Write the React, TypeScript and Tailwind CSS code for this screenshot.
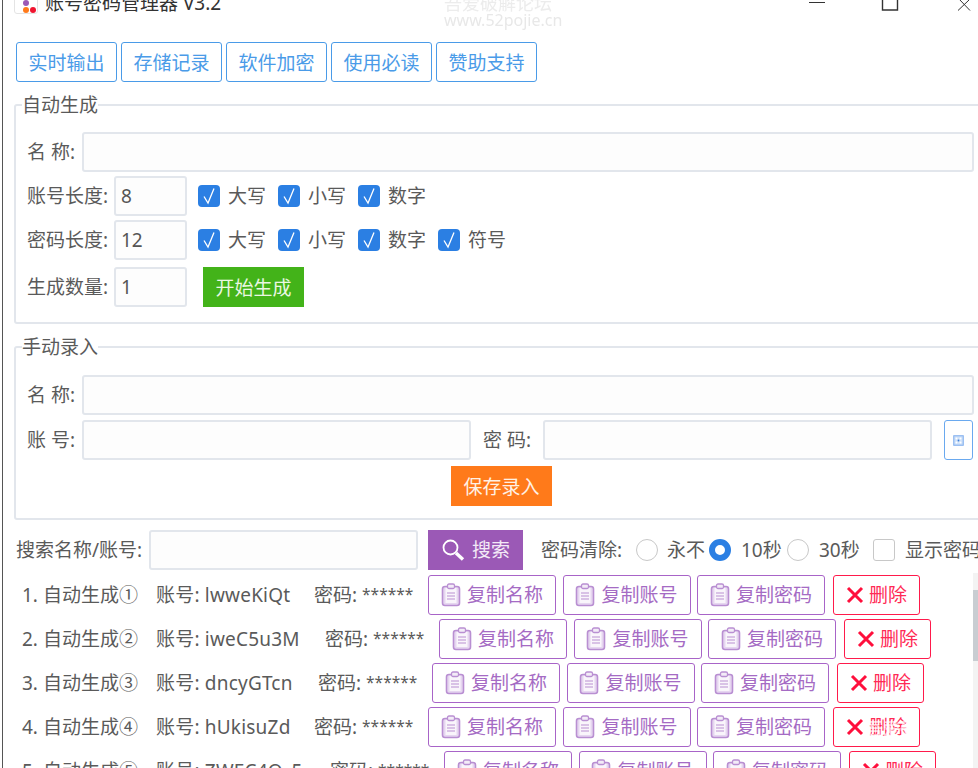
import React from "react";

const Check = () => (
  <span className="flex h-[22px] w-[22px] shrink-0 items-center justify-center rounded-[4px] bg-[#2b7fe3]">
    <svg width="16" height="18" viewBox="0 0 16 18" fill="none" stroke="#fff" strokeWidth="1.3">
      <path d="M3 9.5 L7 16 L13 1.5" />
    </svg>
  </span>
);

const CheckItem = ({ label }: { label: string }) => (
  <span className="flex w-[80px] shrink-0 items-center gap-2">
    <Check />
    <span>{label}</span>
  </span>
);

const inputCls =
  "h-10 rounded-[3px] border-2 border-[#e2e6ec] bg-[#fdfdfd] px-[5px] text-[19px] text-[#555] outline-none";

const Label = ({ children }: { children: React.ReactNode }) => (
  <span className="w-[98px] shrink-0 pl-[11px] whitespace-nowrap">{children}</span>
);

const Clip = () => (
  <svg width="20" height="24" viewBox="0 0 20 24" className="shrink-0">
    <rect x="1.5" y="3.5" width="17" height="19" rx="2.5" fill="#e6d6f0" stroke="#b98fd2" strokeWidth="1.6" />
    <rect x="4.5" y="5" width="11" height="15" fill="#f9f5fb" />
    <rect x="6.5" y="1" width="7" height="4.5" rx="1.5" fill="#f3ecf7" stroke="#b98fd2" strokeWidth="1.3" />
    <path d="M6 10h8M6 13h8M6 16h8" stroke="#b98fd2" strokeWidth="1.1" />
  </svg>
);

const CopyBtn = ({ label }: { label: string }) => (
  <button className="flex h-10 w-[128px] shrink-0 items-center justify-center gap-[6px] rounded-[3px] border border-[#a864c8] text-[#a56bc4]">
    <Clip />
    {label}
  </button>
);

const DelBtn = () => (
  <button className="ml-[1.5px] flex h-10 w-[87px] shrink-0 items-center justify-center gap-[5px] rounded-[3px] border border-[#ff1a4b] text-[#ff2a55]">
    <svg width="18" height="18" viewBox="0 0 18 18" stroke="#ff0f3c" strokeWidth="3" className="shrink-0">
      <path d="M2 2 L16 16 M16 2 L2 16" />
    </svg>
    删除
  </button>
);

const rows = [
  { n: "1. 自动生成①", a: "lwweKiQt", w: "w-[158px]" },
  { n: "2. 自动生成②", a: "iweC5u3M", w: "w-[169px]" },
  { n: "3. 自动生成③", a: "dncyGTcn", w: "w-[162px]" },
  { n: "4. 自动生成④", a: "hUkisuZd", w: "w-[158px]" },
  { n: "5. 自动生成⑤", a: "ZWEC4Q_5", w: "w-[174px]" },
];

const Radio = ({ on }: { on?: boolean }) =>
  on ? (
    <span className="h-[22px] w-[22px] shrink-0 rounded-full border-[6px] border-[#2b7fe3] bg-white" />
  ) : (
    <span className="h-[22px] w-[22px] shrink-0 rounded-full border border-[#c8c8c8] bg-white" />
  );

const tabs = ["实时输出", "存储记录", "软件加密", "使用必读", "赞助支持"];

export default function App() {
  return (
    <div className="relative h-[768px] w-[978px] overflow-hidden bg-white font-['Noto_Sans','Noto_Sans_CJK_SC',sans-serif] text-[19px] leading-[26px] text-[#5a5a5a]">
      <div className="ml-[2px] h-full w-[990px] border-l border-[#555] pl-[11px]">
        {/* title bar */}
        <div className="flex h-[42px] items-start">
          <div className="relative -mt-[9px] h-[23px] w-[24px] shrink-0 rounded-[3px] border border-[#e4e4e4] bg-white">
            <span className="absolute left-[8px] top-[8px] h-[6px] w-[6px] rounded-full bg-[#9b59b6]" />
            <span className="absolute left-[8px] top-[15px] h-[6px] w-[6px] rounded-full bg-[#ff7a1a]" />
            <span className="absolute left-[15px] top-[15px] h-[6px] w-[6px] rounded-full bg-[#f0142f]" />
          </div>
          <span className="-mt-[10px] ml-[7px] whitespace-nowrap text-[#333]">账号密码管理器 V3.2</span>
          <svg width="18" height="12" viewBox="0 0 18 12" className="ml-[587px] shrink-0" stroke="#333" strokeWidth="1" fill="none">
            <path d="M1 2.5H17" />
          </svg>
          <svg width="18" height="11" viewBox="0 0 18 11" className="ml-[55px] shrink-0" stroke="#333" strokeWidth="1.4" fill="none">
            <path d="M1.5 0V10H16.5V0" />
          </svg>
          <svg width="18" height="11" viewBox="0 0 18 11" className="ml-[57px] shrink-0" stroke="#333" strokeWidth="1" fill="none">
            <path d="M2 10.5L13 0M3 -1L14 10.5" />
          </svg>
        </div>

        {/* tabs */}
        <div className="ml-[2px] flex gap-1">
          {tabs.map((t) => (
            <button
              key={t}
              className="h-10 w-[101px] rounded-[3px] border border-[#4a9be8] pt-px text-[#4a9be8]"
            >
              {t}
            </button>
          ))}
        </div>

        {/* auto */}
        <fieldset className="mt-[10px] w-[990px] rounded-[3px] border-2 border-[#e2e6ec] px-0 pb-[15px] pt-[14px]">
          <legend className="ml-[6px] text-[#5a5a5a]">自动生成</legend>
          <div className="flex flex-col gap-[4px]">
            <div className="flex items-center">
              <span className="w-[66px] shrink-0 pl-[11px] whitespace-pre">名 称:</span>
              <input className={inputCls + " w-[892px]"} />
            </div>
            <div className="flex items-center">
              <Label>账号长度:</Label>
              <input defaultValue="8" className={inputCls + " w-[73px]"} />
              <span className="ml-[11px] flex">
                <CheckItem label="大写" />
                <CheckItem label="小写" />
                <CheckItem label="数字" />
              </span>
            </div>
            <div className="flex items-center">
              <Label>密码长度:</Label>
              <input defaultValue="12" className={inputCls + " w-[73px]"} />
              <span className="ml-[11px] flex">
                <CheckItem label="大写" />
                <CheckItem label="小写" />
                <CheckItem label="数字" />
                <CheckItem label="符号" />
              </span>
            </div>
            <div className="mt-[3px] flex items-center">
              <Label>生成数量:</Label>
              <input defaultValue="1" className={inputCls + " w-[73px]"} />
              <button className="ml-[16px] h-10 w-[101px] bg-[#43b319] pt-px text-[#eaf7e2]">开始生成</button>
            </div>
          </div>
        </fieldset>

        {/* manual */}
        <fieldset className="mt-[10px] w-[990px] rounded-[3px] border-2 border-[#e2e6ec] pb-[12px] pt-[15px]">
          <legend className="ml-[6px] text-[#5a5a5a]">手动录入</legend>
          <div className="flex flex-col">
            <div className="flex items-center">
              <span className="w-[66px] shrink-0 pl-[11px] whitespace-pre">名 称:</span>
              <input className={inputCls + " w-[892px]"} />
            </div>
            <div className="mt-[5px] flex items-center">
              <span className="w-[66px] shrink-0 pl-[11px] whitespace-pre">账 号:</span>
              <input className={inputCls + " w-[389px]"} />
              <span className="ml-[12px] w-[60px] shrink-0 whitespace-pre">密 码:</span>
              <input className={inputCls + " w-[389px]"} />
              <button className="ml-[12px] flex h-10 w-[29px] items-center justify-center rounded-[3px] border border-[#6aa9ef]">
                <svg width="11" height="11" viewBox="0 0 11 11">
                  <rect width="11" height="11" rx="1" fill="#9cc0f2" />
                  <rect x="1.5" y="1.5" width="8" height="8" fill="#cfe1f9" />
                  <circle cx="3.5" cy="3.5" r="1" fill="#ffffff" />
                  <circle cx="7.5" cy="3.5" r="1" fill="#ffffff" />
                  <circle cx="3.5" cy="7.5" r="1" fill="#ffffff" />
                  <circle cx="7.5" cy="7.5" r="1" fill="#ffffff" />
                  <circle cx="5.5" cy="5.5" r="0.9" fill="#3f7fd6" />
                </svg>
              </button>
            </div>
            <button className="ml-[435px] mt-[6px] h-10 w-[101px] bg-[#ff7a1a] pt-px text-[#fff1e4]">保存录入</button>
          </div>
        </fieldset>

        {/* search */}
        <div className="mt-[10px] flex h-10 items-center">
          <span className="ml-[2px] w-[133px] shrink-0 whitespace-nowrap">搜索名称/账号:</span>
          <input className={inputCls + " w-[269px]"} />
          <button className="ml-[10px] flex h-10 w-[95px] shrink-0 items-center justify-center gap-[7px] bg-[#9b59b6] text-[#f3e9f7]">
            <svg width="24" height="24" viewBox="0 0 24 24" fill="none" stroke="#fff" className="shrink-0">
              <circle cx="9.5" cy="9.5" r="7" strokeWidth="1.8" />
              <path d="M15 15L22 21.5" strokeWidth="3.4" />
            </svg>
            搜索
          </button>
          <span className="ml-[18px] w-[95px] shrink-0 whitespace-nowrap">密码清除:</span>
          <Radio />
          <span className="ml-[9px] w-[42px] shrink-0">永不</span>
          <Radio on />
          <span className="ml-[10px] w-[46px] shrink-0">10秒</span>
          <Radio />
          <span className="ml-[10px] w-[54px] shrink-0">30秒</span>
          <span className="h-[22px] w-[22px] shrink-0 rounded-[3px] border border-[#c8c8c8]" />
          <span className="ml-[10px] shrink-0 whitespace-nowrap">显示密码</span>
        </div>

        {/* list */}
        <div className="mt-[5px] flex flex-col gap-[4px]">
          {rows.map((r) => (
            <div key={r.n} className="flex h-10 items-center whitespace-nowrap">
              <span className="ml-[8px] w-[134px] shrink-0">{r.n}</span>
              <span className={r.w + " shrink-0 tracking-[0.2px]"}>账号: {r.a}</span>
              <span className="w-[98px] shrink-0">
                密码: <span className="relative -top-[2px] text-[15.5px]">******</span>
              </span>
              <span className="ml-[16px] flex gap-[6.5px]">
                <CopyBtn label="复制名称" />
                <CopyBtn label="复制账号" />
                <CopyBtn label="复制密码" />
                <DelBtn />
              </span>
            </div>
          ))}
        </div>
      </div>

      {/* overlays */}
      <div className="absolute left-[444px] top-[-8px] text-[18px] leading-[22px] text-[#ececec] blur-[0.7px]">吾爱破解论坛</div>
      <div className="absolute left-[444px] top-[10px] text-[16px] leading-[20px] text-[#e8e8e8] blur-[0.7px]">www.52pojie.cn</div>
      <div className="absolute left-[866px] top-[719px] text-[17px] leading-[20px] font-bold text-white/70">吾爱破</div>
      <div className="absolute bottom-0 right-0 top-[573px] w-[5px] bg-[#f3f3f3]">
        <div className="mt-[17px] h-[71px] bg-[#c9cdd2]" />
      </div>
    </div>
  );
}
